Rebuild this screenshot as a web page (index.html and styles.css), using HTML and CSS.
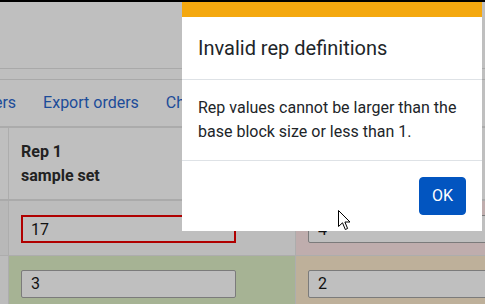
FILE: index.html
```html
<!doctype html>
<html>
<head>
<meta charset="utf-8">
<title>Block reps</title>
<link rel="stylesheet" href="styles.css">
</head>
<body>
	<div class="topbar"></div>
	<div class="header"></div>
	<div class="subbar"></div>

	<div class="nav">
		<a class="nav-link first">Import orders</a>
		<a class="nav-link">Export orders</a>
		<a class="nav-link">Change block</a>
	</div>

	<table class="reps">
		<tr class="head-row">
			<th class="edge-col"></th>
			<th class="rep-col">Rep 1<br>sample set</th>
			<th></th>
		</tr>
		<tr class="row-one">
			<td class="edge-col"></td>
			<td class="rep-col"><input type="text" class="rep-input invalid" value="17"></td>
			<td class="pink"><input type="text" class="rep-input" value="4"></td>
		</tr>
		<tr class="row-two">
			<td class="edge-col"></td>
			<td class="rep-col green"><input type="text" class="rep-input" value="3"></td>
			<td class="tan"><input type="text" class="rep-input" value="2"></td>
		</tr>
	</table>

	<div class="modal">
		<div class="modal-header">
			<h5 class="modal-title">Invalid rep definitions</h5>
		</div>
		<div class="modal-body">
			Rep values cannot be larger than the base block size or less than 1.
		</div>
		<div class="modal-footer">
			<button class="btn-ok">OK</button>
		</div>
	</div>

	<svg class="cursor" width="13" height="21" viewBox="0 0 13 21">
		<path d="M0.5 0.5 L0.5 16.5 L4.5 12.8 L7.3 19.5 L9.6 18.5 L6.9 12 L12 12 Z" fill="#fff" stroke="#000" stroke-width="1"/>
	</svg>
</body>
</html>
```

FILE: styles.css
```css
body {
    margin: 0;
    background-color: #bfbfbf;
    font-family: Roboto, "Liberation Sans", sans-serif;
    color: #212529;
    overflow: hidden;
}

.topbar {
    height: 2px;
    background-color: #000;
}

.header {
    height: 66px;
    border-bottom: 1px solid #a9a9a9;
}

.subbar {
    height: 10px;
    border-bottom: 1px solid #a9a9a9;
}

.nav {
    display: flex;
    height: 46px;
    align-items: center;
    border-bottom: 2px solid #ababab;
    white-space: nowrap;
    margin-left: -81px;
}

.nav-link {
    padding: 0 13.5px;
    font-size: 16px;
    line-height: 24px;
    color: #1c4c99;
}

.nav-link.first {
    padding-left: 0;
}

table.reps {
    border-collapse: collapse;
    table-layout: fixed;
    width: 100%;
}

.reps th, .reps td {
    padding: 0 12px;
    text-align: left;
    vertical-align: top;
}

.reps .edge-col {
    width: 8px;
    padding: 0;
    border-right: 1px solid #adadad;
}

.reps .rep-col {
    width: 262px;
    border-right: 1px solid #adadad;
}

.head-row {
    height: 72px;
    border-bottom: 2px solid #aaaaaa;
}

.head-row th {
    padding-top: 12px;
    font-size: 16px;
    font-weight: bold;
    line-height: 24px;
    color: #222;
}

.row-one {
    height: 55px;
    border-bottom: 1px solid #adadad;
    background-color: #bcbcbc;
}

.row-one .edge-col {
    background-color: #b8b8b8;
}

.row-one td {
    padding-top: 14px;
}

.row-two td {
    padding-top: 14px;
    height: 46px;
}

.row-two .edge-col {
    background-color: #bcbcbc;
}

.green {
    background-color: #a6b394;
}

.pink {
    background-color: #bfadad;
}

.tan {
    background-color: #beb09a;
}

.rep-input {
    display: block;
    box-sizing: border-box;
    width: 215px;
    height: 28px;
    margin: 0;
    padding: 0 9px;
    border: 1px solid #7b7b7b;
    border-radius: 2px;
    background-color: #bfbfbf;
    font-family: Roboto, "Liberation Sans", sans-serif;
    font-size: 16px;
    color: #111;
}

.rep-input.invalid {
    border: 2px solid #b00000;
    border-radius: 0;
    padding-left: 8px;
}

.modal {
    position: absolute;
    top: 2px;
    left: 182px;
    width: 300px;
    background-color: #fff;
    border-top: 15px solid #f4a80f;
}

.modal-header {
    padding: 16px;
    border-bottom: 1px solid #dee2e6;
}

.modal-title {
    margin: 0;
    font-size: 20px;
    font-weight: normal;
    line-height: 30px;
}

.modal-body {
    padding: 16px;
    font-size: 16px;
    line-height: 24px;
    height: 48px;
    border-bottom: 1px solid #dee2e6;
}

.modal-footer {
    display: flex;
    justify-content: flex-end;
    padding: 16px;
}

.btn-ok {
    padding: 6px 12px;
    border: 1px solid #0255c0;
    border-radius: 4px;
    background-color: #0255c0;
    color: #fff;
    font-family: Roboto, "Liberation Sans", sans-serif;
    font-size: 16px;
    line-height: 24px;
}

.cursor {
    position: absolute;
    left: 338px;
    top: 210px;
}
```
